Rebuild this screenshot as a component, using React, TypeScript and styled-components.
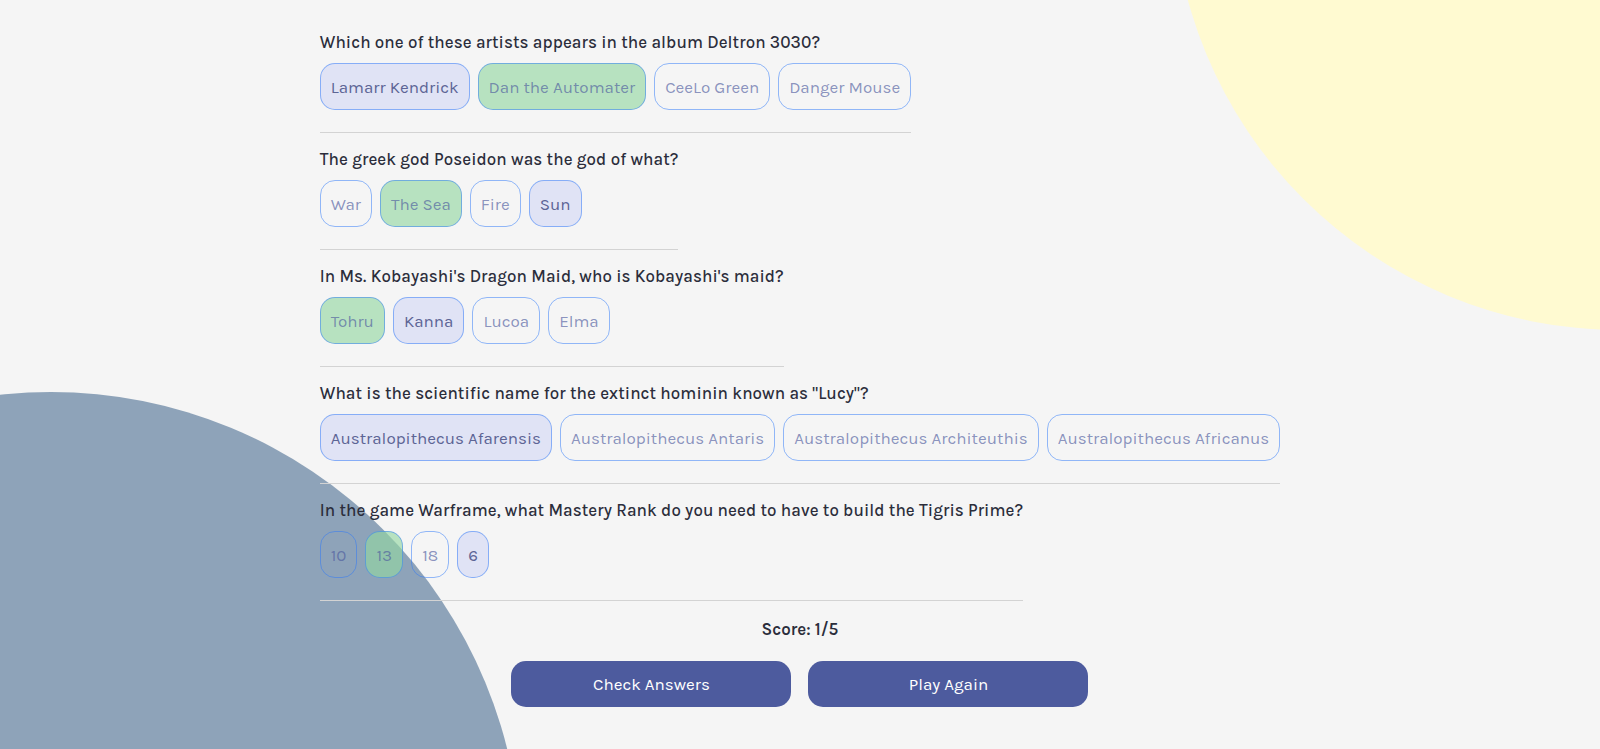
import React from "react";
import styled, { createGlobalStyle } from "styled-components";

const GlobalStyle = createGlobalStyle`
  * { box-sizing: border-box; }
  html, body { margin: 0; padding: 0; }
  body {
    background: #f5f5f5;
    font-family: "Karla", "Lato", "Liberation Sans", sans-serif;
    color: #293264;
  }
`;

const Page = styled.div`
  position: relative;
  min-height: 100vh;
  height: 749px;
  overflow: hidden;
  background: #f5f5f5;
`;

const BlobYellow = styled.div`
  position: absolute;
  left: 1172px;
  top: -566px;
  width: 896px;
  height: 896px;
  border-radius: 50%;
  background: #fffad1;
`;

const BlobBlue = styled.div`
  position: absolute;
  left: -419px;
  top: 392px;
  width: 940px;
  height: 940px;
  border-radius: 50%;
  background: #8ea3b9;
`;

const Quiz = styled.main`
  position: relative;
  z-index: 1;
  width: fit-content;
  margin: 0 auto;
  padding-top: 32px;
  display: flex;
  flex-direction: column;
  align-items: flex-start;
`;

const Block = styled.section`
  display: flex;
  flex-direction: column;
  align-items: stretch;
  width: fit-content;
  margin-bottom: 16px;
`;

const Question = styled.h2`
  margin: 0 0 11px;
  font-size: 17px;
  line-height: 20px;
  font-weight: 500;
  letter-spacing: 0.07px;
  color: #2b2d3b;
`;

const Answers = styled.div`
  display: flex;
  gap: 8px;
`;

type State = "none" | "selected" | "correct";

const Answer = styled.button<{ $state: State }>`
  height: 47px;
  padding: 0 10px;
  border-radius: 15px;
  border: 1px solid rgba(44, 120, 250, 0.5);
  font-family: inherit;
  font-size: 17px;
  font-weight: 400;
  cursor: pointer;
  white-space: nowrap;
  background: ${(p) =>
    p.$state === "selected"
      ? "#e0e3f5"
      : p.$state === "correct"
      ? "rgba(148, 215, 162, 0.63)"
      : "transparent"};
  color: ${(p) =>
    p.$state === "selected" ? "#5d6595" : "rgba(77, 91, 158, 0.65)"};
`;

const Divider = styled.hr`
  margin: 22px 0 0;
  border: 0;
  height: 1px;
  background: #d3d3d3;
  width: 100%;
`;

const Footer = styled.div`
  align-self: stretch;
  display: flex;
  flex-direction: column;
  align-items: center;
  margin-top: 2px;
`;

const Score = styled.p`
  margin: 0 0 22px;
  font-size: 17px;
  line-height: 20px;
  font-weight: 600;
  color: #2b2d3b;
`;

const Actions = styled.div`
  display: flex;
  gap: 17px;
`;

const ActionButton = styled.button`
  width: 280px;
  height: 46px;
  border: 0;
  border-radius: 15px;
  background: #4d5b9e;
  color: #ffffff;
  font-family: inherit;
  font-size: 17px;
  font-weight: 400;
  cursor: pointer;
`;

type Q = { q: string; answers: string[]; selected: number; correct: number };

const questions: Q[] = [
  {
    q: "Which one of these artists appears in the album Deltron 3030?",
    answers: ["Lamarr Kendrick", "Dan the Automater", "CeeLo Green", "Danger Mouse"],
    selected: 0,
    correct: 1,
  },
  {
    q: "The greek god Poseidon was the god of what?",
    answers: ["War", "The Sea", "Fire", "Sun"],
    selected: 3,
    correct: 1,
  },
  {
    q: "In Ms. Kobayashi's Dragon Maid, who is Kobayashi's maid?",
    answers: ["Tohru", "Kanna", "Lucoa", "Elma"],
    selected: 1,
    correct: 0,
  },
  {
    q: 'What is the scientific name for the extinct hominin known as "Lucy"?',
    answers: [
      "Australopithecus Afarensis",
      "Australopithecus Antaris",
      "Australopithecus Architeuthis",
      "Australopithecus Africanus",
    ],
    selected: 0,
    correct: 0,
  },
  {
    q: "In the game Warframe, what Mastery Rank do you need to have to build the Tigris Prime?",
    answers: ["10", "13", "18", "6"],
    selected: 3,
    correct: 1,
  },
];

export default function App() {
  return (
    <Page>
      <GlobalStyle />
      <BlobYellow />
      <BlobBlue />
      <Quiz>
        {questions.map((item, qi) => (
          <Block key={qi}>
            <Question>{item.q}</Question>
            <Answers>
              {item.answers.map((a, ai) => {
                const state: State =
                  ai === item.selected ? "selected" : ai === item.correct ? "correct" : "none";
                return (
                  <Answer key={ai} $state={state}>
                    {a}
                  </Answer>
                );
              })}
            </Answers>
            <Divider />
          </Block>
        ))}
        <Footer>
          <Score>Score: 1/5</Score>
          <Actions>
            <ActionButton>Check Answers</ActionButton>
            <ActionButton>Play Again</ActionButton>
          </Actions>
        </Footer>
      </Quiz>
    </Page>
  );
}
